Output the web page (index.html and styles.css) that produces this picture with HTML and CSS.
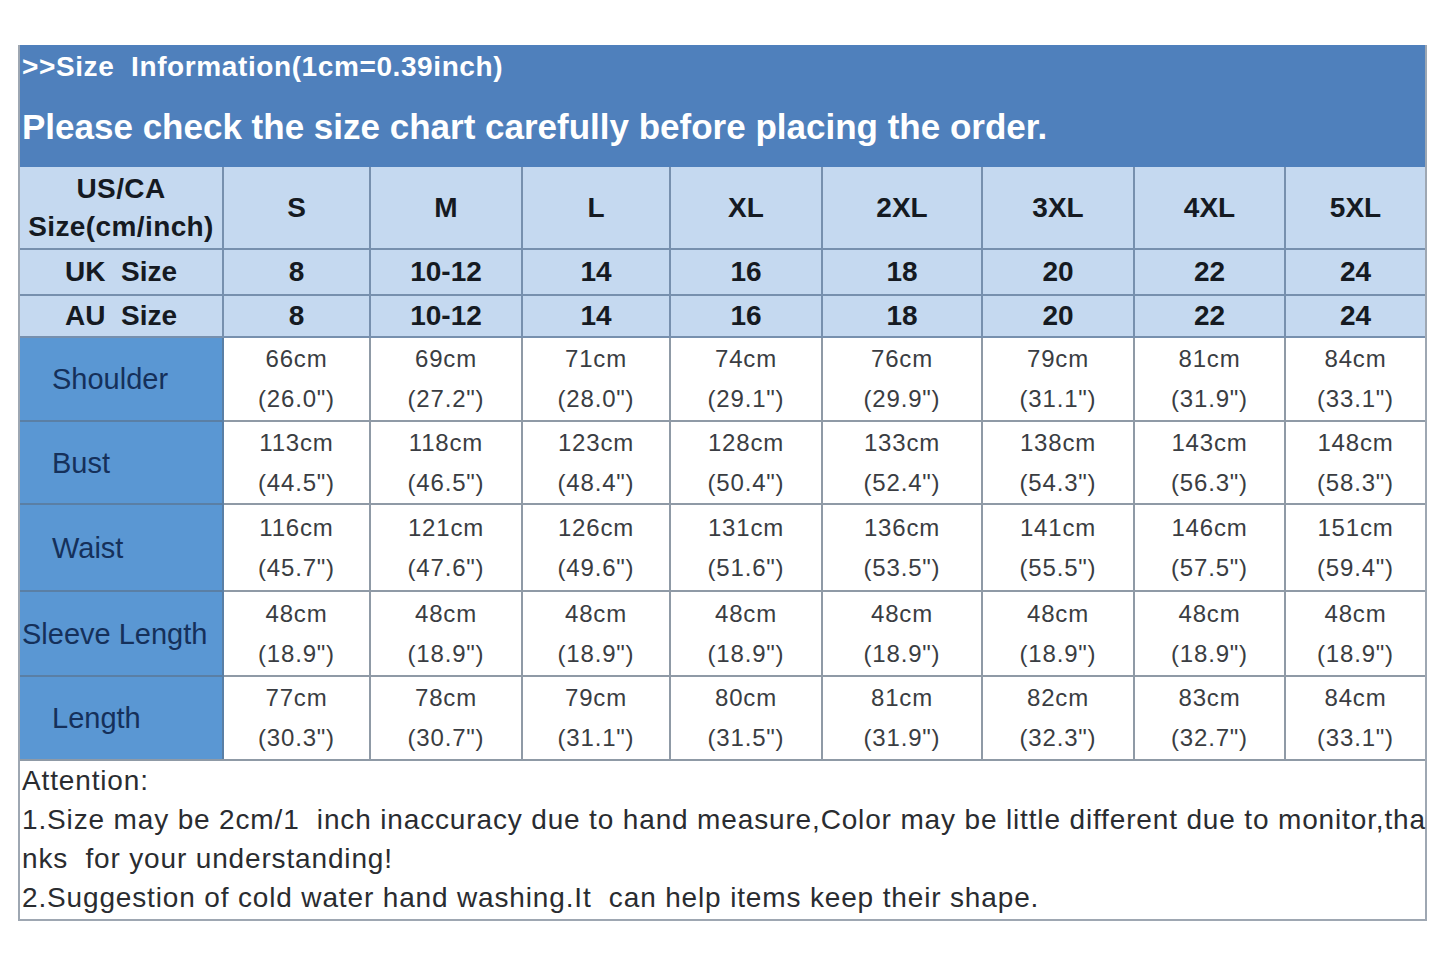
FILE: index.html
```html
<!DOCTYPE html>
<html>
<head>
<meta charset="utf-8">
<title>Size Information</title>
<link rel="stylesheet" href="styles.css">
</head>
<body>
<div class="chart">
  <div class="banner">
    <div class="banner-sub">&gt;&gt;Size&nbsp; Information(1cm=0.39inch)</div>
    <div class="banner-title">Please check the size chart carefully before placing the order.</div>
  </div>
  <table class="sizes">
    <colgroup>
      <col class="w-label"><col class="w-s"><col class="w-m"><col class="w-l"><col class="w-xl"><col class="w-2xl"><col class="w-3xl"><col class="w-4xl"><col class="w-5xl">
    </colgroup>
    <tr class="row-head">
      <th>US/CA<br>Size(cm/inch)</th><th>S</th><th>M</th><th>L</th><th>XL</th><th>2XL</th><th>3XL</th><th>4XL</th><th>5XL</th>
    </tr>
    <tr class="row-uk">
      <th>UK&nbsp; Size</th><th>8</th><th>10-12</th><th>14</th><th>16</th><th>18</th><th>20</th><th>22</th><th>24</th>
    </tr>
    <tr class="row-au">
      <th>AU&nbsp; Size</th><th>8</th><th>10-12</th><th>14</th><th>16</th><th>18</th><th>20</th><th>22</th><th>24</th>
    </tr>
    <tr class="row-shoulder">
      <td class="label">Shoulder</td>
      <td>66cm<br>(26.0")</td><td>69cm<br>(27.2")</td><td>71cm<br>(28.0")</td><td>74cm<br>(29.1")</td><td>76cm<br>(29.9")</td><td>79cm<br>(31.1")</td><td>81cm<br>(31.9")</td><td>84cm<br>(33.1")</td>
    </tr>
    <tr class="row-bust">
      <td class="label">Bust</td>
      <td>113cm<br>(44.5")</td><td>118cm<br>(46.5")</td><td>123cm<br>(48.4")</td><td>128cm<br>(50.4")</td><td>133cm<br>(52.4")</td><td>138cm<br>(54.3")</td><td>143cm<br>(56.3")</td><td>148cm<br>(58.3")</td>
    </tr>
    <tr class="row-waist">
      <td class="label">Waist</td>
      <td>116cm<br>(45.7")</td><td>121cm<br>(47.6")</td><td>126cm<br>(49.6")</td><td>131cm<br>(51.6")</td><td>136cm<br>(53.5")</td><td>141cm<br>(55.5")</td><td>146cm<br>(57.5")</td><td>151cm<br>(59.4")</td>
    </tr>
    <tr class="row-sleeve">
      <td class="label label-wide">Sleeve Length</td>
      <td>48cm<br>(18.9")</td><td>48cm<br>(18.9")</td><td>48cm<br>(18.9")</td><td>48cm<br>(18.9")</td><td>48cm<br>(18.9")</td><td>48cm<br>(18.9")</td><td>48cm<br>(18.9")</td><td>48cm<br>(18.9")</td>
    </tr>
    <tr class="row-length">
      <td class="label">Length</td>
      <td>77cm<br>(30.3")</td><td>78cm<br>(30.7")</td><td>79cm<br>(31.1")</td><td>80cm<br>(31.5")</td><td>81cm<br>(31.9")</td><td>82cm<br>(32.3")</td><td>83cm<br>(32.7")</td><td>84cm<br>(33.1")</td>
    </tr>
  </table>
  <div class="notes">
    <p>Attention:</p>
    <p>1.Size may be 2cm/1&nbsp; inch inaccuracy due to hand measure,Color may be little different due to monitor,tha</p>
    <p>nks&nbsp; for your understanding!</p>
    <p>2.Suggestion of cold water hand washing.It&nbsp; can help items keep their shape.</p>
  </div>
</div>
</body>
</html>
```

FILE: styles.css
```css
html, body {
  margin: 0;
  padding: 0;
  background: #ffffff;
}

body {
  font-family: "Liberation Sans", Arial, sans-serif;
}

.chart {
  margin: 45px 0 0 18px;
  width: 1409px;
  box-sizing: border-box;
  border: 2px solid #9ea7b2;
  border-top: 0;
}

.banner {
  background: #4f80bc;
  color: #ffffff;
  font-weight: bold;
  height: 122px;
  box-sizing: border-box;
  padding: 4px 0 0 2px;
}

.banner-sub {
  font-size: 28px;
  line-height: 36px;
  letter-spacing: 0.6px;
}

.banner-title {
  font-size: 35px;
  line-height: 48px;
  margin-top: 18px;
}

.sizes {
  width: 1405px;
  table-layout: fixed;
  border-collapse: collapse;
}

.w-label { width: 203px; }
.w-s { width: 147px; }
.w-m { width: 152px; }
.w-l { width: 148px; }
.w-xl { width: 152px; }
.w-2xl { width: 160px; }
.w-3xl { width: 152px; }
.w-4xl { width: 151px; }
.w-5xl { width: 140px; }

.sizes th,
.sizes td {
  padding: 0;
  text-align: center;
  vertical-align: middle;
}

.sizes th {
  background: #c5d9f0;
  color: #151a22;
  font-weight: bold;
  font-size: 28px;
  line-height: 38px;
  border: 2px solid #7790ae;
}

.sizes tr:first-child th:first-child {
  letter-spacing: 0.4px;
}

.sizes tr:first-child th {
  border-top: 0;
}

.sizes th:first-child,
.sizes td:first-child {
  border-left: 0;
}

.sizes th:last-child,
.sizes td:last-child {
  border-right: 0;
}

.sizes td {
  background: #ffffff;
  color: #3a3d42;
  font-size: 24px;
  line-height: 40px;
  letter-spacing: 0.8px;
  border: 2px solid #8f9aa6;
}

.sizes td.label {
  background: #5a97d3;
  color: #15305a;
  font-size: 29px;
  letter-spacing: 0;
  text-align: left;
  padding-left: 32px;
  border-color: #5a7fa5;
}

.sizes td.label-wide {
  padding-left: 2px;
  white-space: nowrap;
}

.row-head { height: 82px; }
.row-uk { height: 46px; }
.row-au { height: 42px; }
.row-shoulder { height: 84px; }
.row-bust { height: 83px; }
.row-waist { height: 87px; }
.row-sleeve { height: 85px; }
.row-length { height: 83px; }

.sizes tr:last-child td {
  border-bottom: 0;
}

.notes {
  border-top: 2px solid #8f9aa6;
  height: 160px;
  box-sizing: border-box;
  padding: 0 0 0 2px;
  color: #2a2c30;
  font-size: 28px;
  line-height: 39px;
}

.notes p {
  margin: 0;
  white-space: nowrap;
  letter-spacing: 0.85px;
}
```
